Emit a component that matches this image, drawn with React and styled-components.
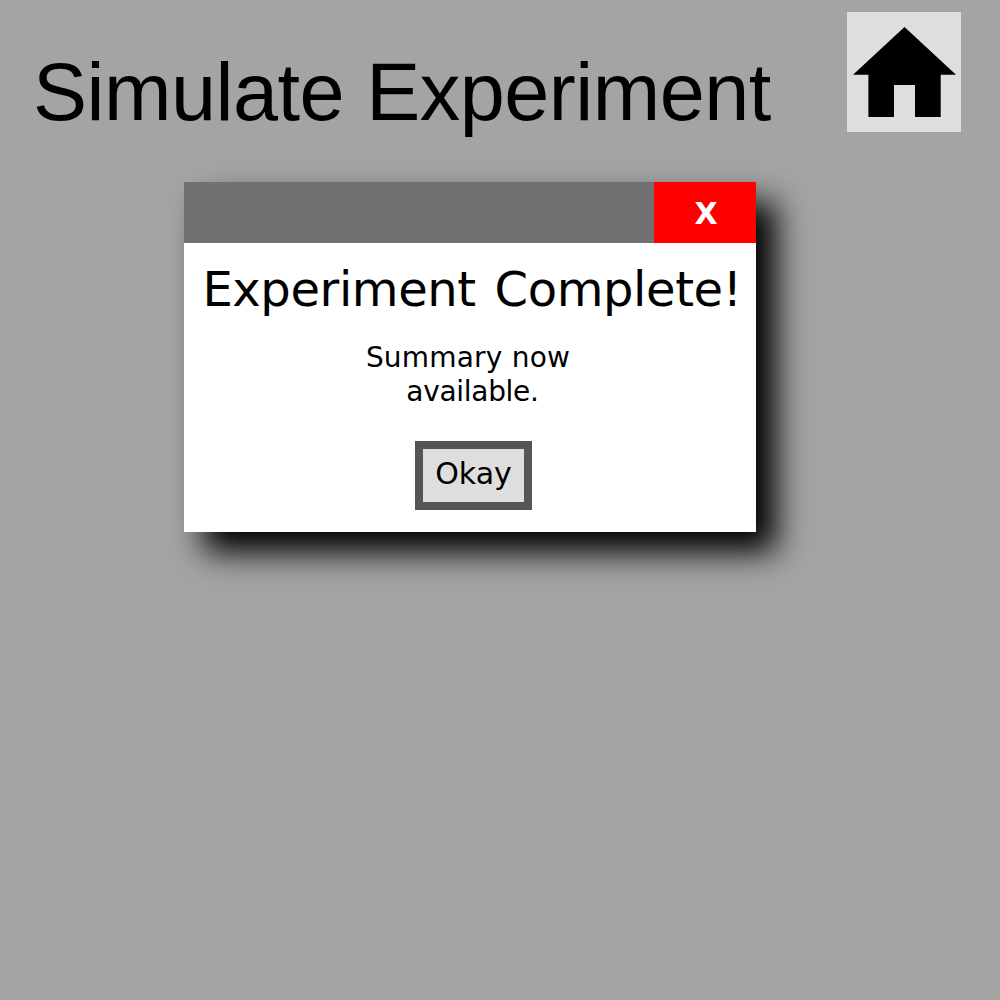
import React from "react";
import styled, { createGlobalStyle } from "styled-components";

const GlobalStyle = createGlobalStyle`
  body { margin: 0; background: #a4a4a4; color: #000; }
  * { box-sizing: border-box; }
`;
const Page = styled.main`
  width: 1000px;
  height: 1000px;
  overflow: hidden;
  background: #a4a4a4;
  font-family: "DejaVu Sans", Verdana, sans-serif;
`;
const Header = styled.header`
  height: 182px;
  display: flex;
  justify-content: space-between;
  align-items: flex-start;
  padding: 12px 39px 0 33px;
`;
const Title = styled.h1`
  margin: 34px 0 0;
  font: 400 81px/92px "Liberation Sans", Arial, sans-serif;
  letter-spacing: -0.5px;
  white-space: nowrap;
`;
const HomeButton = styled.button`
  width: 114px;
  height: 120px;
  padding: 0;
  border: 0;
  background: #dedede;
  svg { display: block; }
`;
const Dialog = styled.section`
  width: 572px;
  height: 350px;
  margin-left: 184px;
  background: #fff;
  box-shadow: 20px 20px 30px #000;
`;
const TitleBar = styled.div`
  height: 61px;
  display: flex;
  justify-content: flex-end;
  background: #717171;
`;
const CloseButton = styled.button`
  width: 102px;
  height: 61px;
  padding: 2px 0 0 2px;
  border: 0;
  background: #f00;
  color: #fff;
  font: 700 30px/59px "DejaVu Sans", Verdana, sans-serif;
`;
const Body = styled.div`
  display: flex;
  flex-direction: column;
  align-items: center;
`;
const Heading = styled.h2`
  margin: 18px 0 0 4px;
  font-size: 48px;
  font-weight: 400;
  line-height: 56px;
  letter-spacing: -0.4px;
  word-spacing: 4px;
  white-space: nowrap;
`;
const Message = styled.p`
  margin: 24px 0 0;
  padding-right: 4px;
  font-size: 28px;
  line-height: 34px;
  text-align: center;
`;
const Line = styled.span`
  display: block;
  padding-left: ${({ $shift }) => $shift || 0}px;
  letter-spacing: ${({ $track }) => $track || 0}px;
  white-space: nowrap;
`;
const OkayButton = styled.button`
  width: 117px;
  height: 69px;
  margin: 32px 0 0 7px;
  padding: 0 0 4px;
  border: 8px solid #555;
  background: #dedede;
  color: #000;
  font: 400 30px/49px "DejaVu Sans", Verdana, sans-serif;
`;

export default function App() {
  return (
    <Page>
      <GlobalStyle />
      <Header>
        <Title>Simulate Experiment</Title>
        <HomeButton aria-label="Home">
          <svg width="114" height="120" viewBox="0 0 114 120">
            <path d="M57.5 15 L109 62.8 H93.7 V105 H68 V73 H47 V105 H21.4 V62.8 H6 Z" />
          </svg>
        </HomeButton>
      </Header>
      <Dialog role="dialog">
        <TitleBar>
          <CloseButton>X</CloseButton>
        </TitleBar>
        <Body>
          <Heading>Experiment Complete!</Heading>
          <Message>
            <Line $track={0.2}>Summary now</Line>
            <Line $shift={9} $track={-0.3}>available.</Line>
          </Message>
          <OkayButton>Okay</OkayButton>
        </Body>
      </Dialog>
    </Page>
  );
}
